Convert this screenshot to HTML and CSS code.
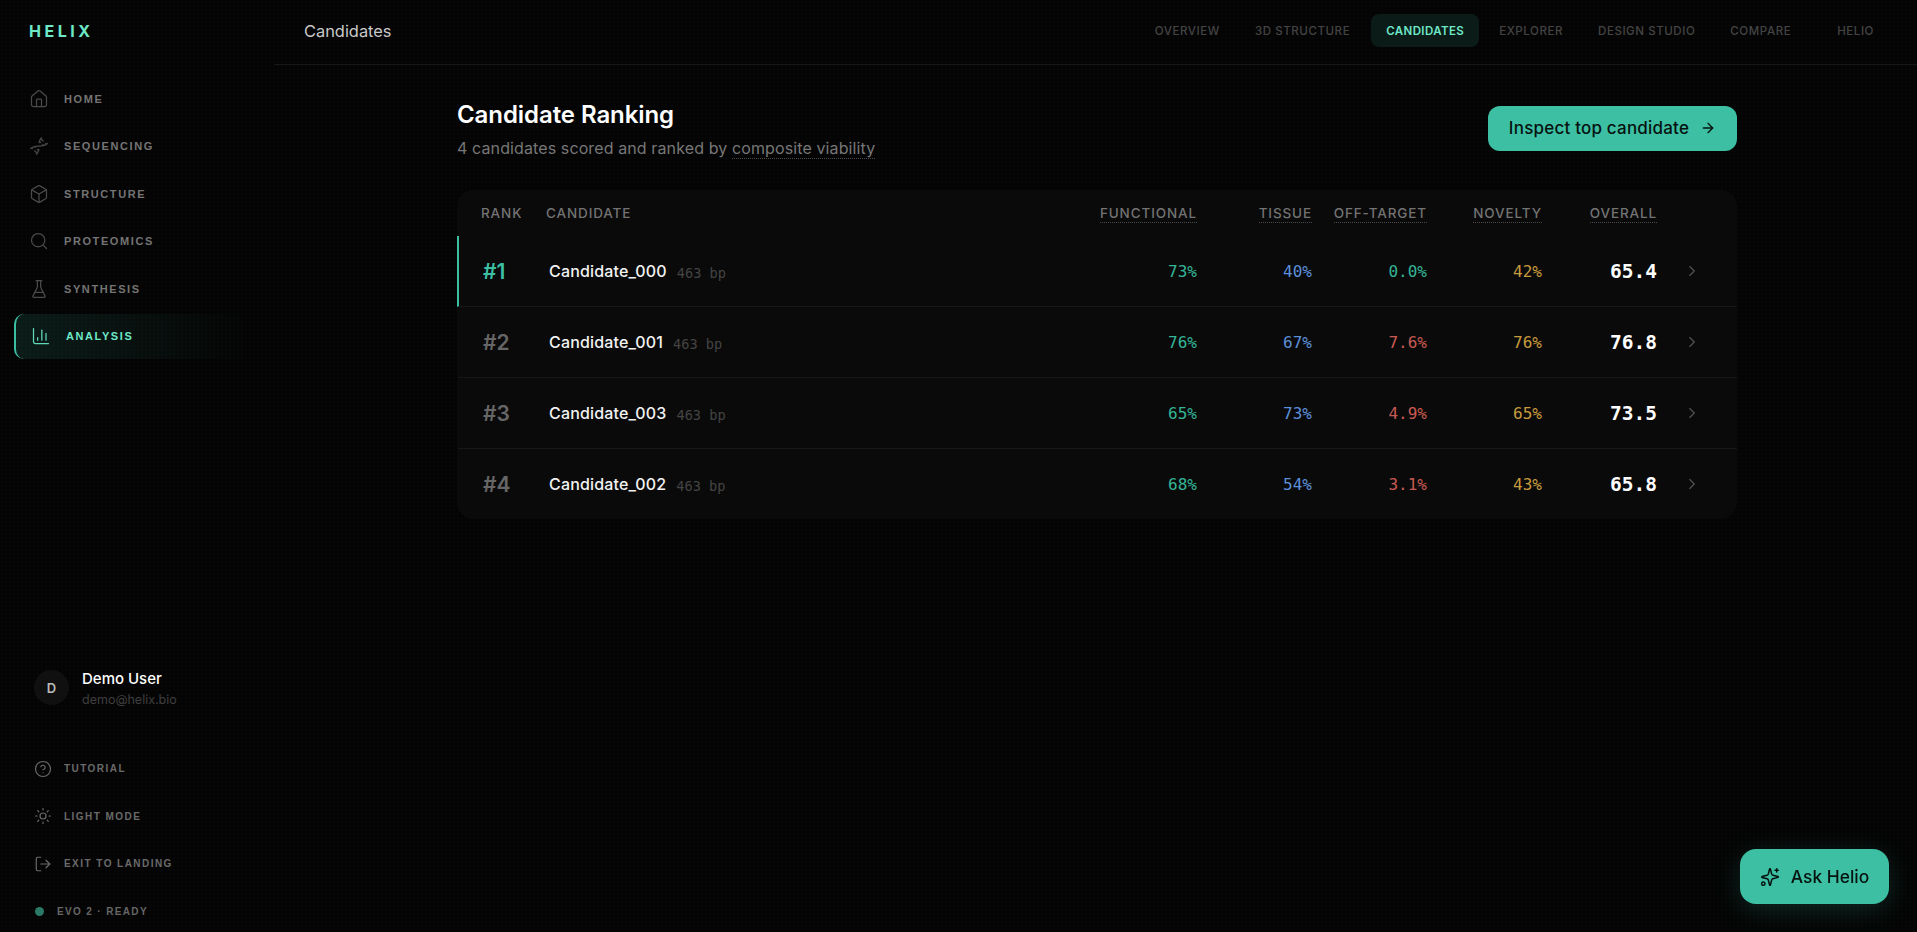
FILE: index.html
```html
<!DOCTYPE html>
<html lang="en">
<head>
<meta charset="utf-8">
<title>Helix - Candidates</title>
<link rel="stylesheet" href="styles.css">
</head>
<body>
<div class="app">
  <aside class="sidebar">
    <div class="logo">HELIX</div>
    <nav class="side-nav">
      <a class="side-item"><svg class="icon" viewBox="0 0 24 24"><path d="M15 21v-8a1 1 0 0 0-1-1h-4a1 1 0 0 0-1 1v8"/><path d="M3 10a2 2 0 0 1 .709-1.528l7-6a2 2 0 0 1 2.582 0l7 6A2 2 0 0 1 21 10v9a2 2 0 0 1-2 2H5a2 2 0 0 1-2-2z"/></svg><span>HOME</span></a>
      <a class="side-item"><svg class="icon" viewBox="0 0 24 24"><path d="M2 15c6.667-6 13.333 0 20-6"/><path d="M9 22c1.798-1.998 2.518-3.995 2.807-5.993"/><path d="M15 2c-1.798 1.998-2.518 3.995-2.807 5.993"/><path d="m17 6-2.5-2.5"/><path d="m14 8-1-1"/><path d="m7 18 2.5 2.5"/><path d="m3.5 14.5.5.5"/><path d="m20 9 .5.5"/><path d="m6.5 12.5 1 1"/><path d="m16.5 10.5 1 1"/><path d="m10 16 1.5 1.5"/></svg><span>SEQUENCING</span></a>
      <a class="side-item"><svg class="icon" viewBox="0 0 24 24"><path d="M21 8a2 2 0 0 0-1-1.73l-7-4a2 2 0 0 0-2 0l-7 4A2 2 0 0 0 3 8v8a2 2 0 0 0 1 1.73l7 4a2 2 0 0 0 2 0l7-4A2 2 0 0 0 21 16Z"/><path d="m3.3 7 8.7 5 8.7-5"/><path d="M12 22V12"/></svg><span>STRUCTURE</span></a>
      <a class="side-item"><svg class="icon" viewBox="0 0 24 24"><circle cx="11" cy="11" r="8"/><path d="m21 21-4.3-4.3"/></svg><span>PROTEOMICS</span></a>
      <a class="side-item"><svg class="icon" viewBox="0 0 24 24"><path d="M10 2v7.527a2 2 0 0 1-.211.896L4.72 20.55a1 1 0 0 0 .9 1.45h12.76a1 1 0 0 0 .9-1.45l-5.069-10.127A2 2 0 0 1 14 9.527V2"/><path d="M8.5 2h7"/><path d="M7 16h10"/></svg><span>SYNTHESIS</span></a>
      <a class="side-item active"><svg class="icon" viewBox="0 0 24 24"><path d="M3 3v16a2 2 0 0 0 2 2h16"/><path d="M18 17V9"/><path d="M13 17V5"/><path d="M8 17v-3"/></svg><span>ANALYSIS</span></a>
    </nav>
    <div class="user">
      <div class="avatar">D</div>
      <div class="user-text">
        <div class="user-name">Demo User</div>
        <div class="user-mail">demo@helix.bio</div>
      </div>
    </div>
    <div class="side-links">
      <a class="side-link"><svg class="icon small" viewBox="0 0 24 24"><circle cx="12" cy="12" r="10"/><path d="M9.09 9a3 3 0 0 1 5.83 1c0 2-3 3-3 3"/><path d="M12 17h.01"/></svg><span>TUTORIAL</span></a>
      <a class="side-link"><svg class="icon small" viewBox="0 0 24 24"><circle cx="12" cy="12" r="4"/><path d="M12 2v2"/><path d="M12 20v2"/><path d="m4.93 4.93 1.41 1.41"/><path d="m17.66 17.66 1.41 1.41"/><path d="M2 12h2"/><path d="M20 12h2"/><path d="m6.34 17.66-1.41 1.41"/><path d="m19.07 4.93-1.41 1.41"/></svg><span>LIGHT MODE</span></a>
      <a class="side-link"><svg class="icon small" viewBox="0 0 24 24"><path d="M9 21H5a2 2 0 0 1-2-2V5a2 2 0 0 1 2-2h4"/><path d="m16 17 5-5-5-5"/><path d="M21 12H9"/></svg><span>EXIT TO LANDING</span></a>
    </div>
    <div class="status"><i class="dot"></i><span>EVO 2 · READY</span></div>
  </aside>

  <div class="main">
    <header class="topbar">
      <div class="page-title">Candidates</div>
      <nav class="tabs">
        <a class="tab">OVERVIEW</a>
        <a class="tab">3D STRUCTURE</a>
        <a class="tab current">CANDIDATES</a>
        <a class="tab">EXPLORER</a>
        <a class="tab">DESIGN STUDIO</a>
        <a class="tab">COMPARE</a>
        <a class="tab last">HELIO</a>
      </nav>
    </header>

    <main class="content">
      <div class="head">
        <div>
          <h1>Candidate Ranking</h1>
          <p class="sub">4 candidates scored and ranked by <span class="dotted">composite viability</span></p>
        </div>
        <button class="cta">Inspect top candidate<svg class="icon arrow" viewBox="0 0 24 24"><path d="M5 12h14"/><path d="m12 5 7 7-7 7"/></svg></button>
      </div>

      <section class="table">
        <div class="thead">
          <span>RANK</span>
          <span>CANDIDATE</span>
          <span class="r"><b>FUNCTIONAL</b></span>
          <span class="r"><b>TISSUE</b></span>
          <span class="r"><b>OFF-TARGET</b></span>
          <span class="r"><b>NOVELTY</b></span>
          <span class="r"><b>OVERALL</b></span>
          <span></span>
        </div>

        <div class="row first">
          <span class="rank">#1</span>
          <span class="cand"><span class="name">Candidate_000</span><span class="bp">463 bp</span></span>
          <span class="val teal">73%</span><span class="val blue">40%</span><span class="val teal">0.0%</span><span class="val amber">42%</span>
          <span class="score">65.4</span>
          <svg class="icon chev" viewBox="0 0 24 24"><path d="m9 18 6-6-6-6"/></svg>
        </div>
        <div class="row">
          <span class="rank">#2</span>
          <span class="cand"><span class="name">Candidate_001</span><span class="bp">463 bp</span></span>
          <span class="val teal">76%</span><span class="val blue">67%</span><span class="val red">7.6%</span><span class="val amber">76%</span>
          <span class="score">76.8</span>
          <svg class="icon chev" viewBox="0 0 24 24"><path d="m9 18 6-6-6-6"/></svg>
        </div>
        <div class="row">
          <span class="rank">#3</span>
          <span class="cand"><span class="name">Candidate_003</span><span class="bp">463 bp</span></span>
          <span class="val teal">65%</span><span class="val blue">73%</span><span class="val red">4.9%</span><span class="val amber">65%</span>
          <span class="score">73.5</span>
          <svg class="icon chev" viewBox="0 0 24 24"><path d="m9 18 6-6-6-6"/></svg>
        </div>
        <div class="row">
          <span class="rank">#4</span>
          <span class="cand"><span class="name">Candidate_002</span><span class="bp">463 bp</span></span>
          <span class="val teal">68%</span><span class="val blue">54%</span><span class="val red">3.1%</span><span class="val amber">43%</span>
          <span class="score">65.8</span>
          <svg class="icon chev" viewBox="0 0 24 24"><path d="m9 18 6-6-6-6"/></svg>
        </div>
      </section>
    </main>
  </div>
</div>

<button class="ask"><svg class="icon spark" viewBox="0 0 24 24"><path d="M9.937 15.5A2 2 0 0 0 8.5 14.063l-6.135-1.582a.5.5 0 0 1 0-.962L8.5 9.936A2 2 0 0 0 9.937 8.5l1.582-6.135a.5.5 0 0 1 .963 0L14.063 8.5A2 2 0 0 0 15.5 9.937l6.135 1.581a.5.5 0 0 1 0 .964L15.5 14.063a2 2 0 0 0-1.437 1.437l-1.582 6.135a.5.5 0 0 1-.963 0z"/><path d="M20 2v4"/><path d="M22 4h-4"/><circle cx="4" cy="20" r="2"/></svg>Ask Helio</button>
</body>
</html>
```

FILE: styles.css
```css
* { box-sizing: border-box; }
html, body { height: 100%; }
body {
  margin: 0;
  overflow: hidden;
  background-color: #040404;
  background-image: radial-gradient(rgba(255, 255, 255, 0.01) 1px, transparent 1px);
  background-size: 4px 4px;
  color: #fff;
  font-family: Inter, "Liberation Sans", sans-serif;
}
.app { display: flex; height: 932px; }
.icon {
  width: 20px;
  height: 20px;
  flex: none;
  fill: none;
  stroke: currentColor;
  stroke-width: 1.5;
  stroke-linecap: round;
  stroke-linejoin: round;
}
.icon.small { width: 18px; height: 18px; }

/* Sidebar */
.sidebar {
  width: 274px;
  flex: none;
  display: flex;
  flex-direction: column;
  padding: 0 24px 9px 14px;
}
.logo {
  height: 62px;
  padding-left: 15px;
  display: flex;
  align-items: center;
  font-size: 16px;
  font-weight: 700;
  letter-spacing: 0.22em;
  color: #6ee7c7;
}
.side-nav { display: flex; flex-direction: column; gap: 2.5px; margin-top: 14px; }
.side-item {
  height: 45px;
  display: flex;
  align-items: center;
  gap: 15px;
  padding-left: 15px;
  font-family: "Liberation Sans", sans-serif;
  font-size: 11px;
  font-weight: 700;
  letter-spacing: 0.145em;
  color: #747474;
  border-radius: 10px;
}
.side-item .icon { color: #4a4a4a; }
.side-item.active {
  border-left: 2px solid #3bbfa3;
  background: linear-gradient(90deg, rgba(60, 190, 160, 0.13), rgba(60, 190, 160, 0) 100%);
  color: #6ee7c7;
}
.side-item.active .icon { color: #5fd9ba; }

.user {
  margin-top: auto;
  display: flex;
  align-items: center;
  gap: 13px;
  padding-left: 20px;
}
.avatar {
  width: 35px;
  height: 35px;
  border-radius: 50%;
  background: #101010;
  color: #bbb;
  display: flex;
  align-items: center;
  justify-content: center;
  font-size: 13px;
  font-weight: 600;
}
.user-text { margin-top: 4px; }
.user-name { font-size: 15px; font-weight: 500; line-height: 20px; color: #fff; }
.user-mail { font-size: 12.5px; line-height: 20px; margin-top: 1px; color: #3f3f3f; }

.side-links { display: flex; flex-direction: column; gap: 2.5px; margin-top: 36px; }
.side-link {
  height: 45px;
  display: flex;
  align-items: center;
  gap: 12px;
  padding-left: 20px;
  font-family: "Liberation Sans", sans-serif;
  font-size: 10px;
  font-weight: 700;
  letter-spacing: 0.145em;
  color: #6a6a6a;
}
.side-link .icon { color: #6a6a6a; stroke-width: 1.6; }
.status {
  display: flex;
  align-items: center;
  gap: 13px;
  height: 24px;
  margin-top: 13px;
  padding-left: 21px;
  font-family: "Liberation Sans", sans-serif;
  font-size: 10px;
  font-weight: 700;
  letter-spacing: 0.135em;
  color: #666;
}
.dot { width: 9px; height: 9px; border-radius: 50%; background: #2b7a65; }

/* Top bar */
.main { flex: 1; min-width: 0; display: flex; flex-direction: column; }
.topbar {
  height: 65px;
  flex: none;
  display: flex;
  align-items: center;
  justify-content: space-between;
  padding: 0 28px 3px 30px;
  border-bottom: 1px solid #171717;
}
.page-title { font-size: 16.4px; color: #c9c9c9; }
.tabs { display: flex; align-items: center; gap: 5px; }
.tab {
  height: 33px;
  display: flex;
  align-items: center;
  padding: 0 15px;
  border-radius: 8px;
  font-size: 11.5px;
  font-weight: 500;
  letter-spacing: 0.05em;
  color: #444;
}
.tab.last { padding-left: 26px; }
.tab.current { margin-left: 1px; background: #0b1c18; color: #6ee7c7; font-weight: 600; letter-spacing: 0.035em; }

/* Content */
.content { padding: 32px 180px 0 183px; }
.head { display: flex; justify-content: space-between; align-items: center; }
h1 { margin: 0; font-size: 24px; font-weight: 600; line-height: 35px; letter-spacing: -0.003em; color: #fff; }
.sub { margin: 5px 0 0; font-size: 16px; line-height: 22px; letter-spacing: 0.007em; color: #777; }
.dotted { border-bottom: 1px dotted #4a4a4a; }
.cta {
  width: 249px;
  height: 45px;
  border: 0;
  border-radius: 12px;
  background: #3cbfa3;
  color: #07120f;
  display: flex;
  align-items: center;
  justify-content: center;
  gap: 11px;
  padding-top: 1px;
  font-family: Inter, sans-serif;
  font-size: 17px;
  font-weight: 500;
  letter-spacing: 0.012em;
}
.icon.arrow { width: 16px; height: 16px; stroke-width: 2; }

.table {
  margin-top: 31px;
  border-radius: 16px;
  background: #0a0a0a;
  overflow: hidden;
}
.thead, .row {
  display: grid;
  grid-template-columns: 41px 1fr 91px 91px 91px 91px 91px 32px;
  column-gap: 24px;
  align-items: center;
}
.thead {
  height: 46px;
  padding: 0 24px;
  font-size: 13.5px;
  font-weight: 500;
  letter-spacing: 0.065em;
  color: #737373;
}
.thead .r { text-align: right; white-space: nowrap; direction: rtl; }
.thead b { font-weight: 500; border-bottom: 1px dotted #4a4a4a; padding-bottom: 1px; direction: ltr; unicode-bidi: isolate; }
.row {
  height: 71px;
  padding: 0 24px;
  border-left: 2px solid transparent;
  border-bottom: 1px solid #171717;
}
.row:last-child { border-bottom: 0; height: 70px; }
.row.first { border-left-color: #3bbfa3; }
.rank { font-size: 21px; font-weight: 600; color: #666; }
.first .rank { color: #3cbfa3; }
.cand { display: flex; align-items: baseline; gap: 10px; padding-left: 1px; }
.name { font-size: 16px; font-weight: 500; letter-spacing: 0.01em; color: #f2f2f2; }
.bp { font-family: "DejaVu Sans Mono", monospace; font-size: 13.6px; color: #444; position: relative; top: 1px; }
.val, .score { text-align: right; font-family: "DejaVu Sans Mono", monospace; }
.val { font-size: 16px; }
.teal { color: #34b597; }
.blue { color: #5b8fd8; }
.red { color: #c95a52; }
.amber { color: #c79a3e; }
.score { font-size: 19.5px; font-weight: 700; color: #fff; }
.icon.chev { width: 18px; height: 18px; color: #555; margin-left: 2px; }

.ask {
  position: fixed;
  left: 1740px;
  top: 849px;
  width: 149px;
  height: 55px;
  border: 0;
  border-radius: 16px;
  background: #3cbfa3;
  color: #07120f;
  display: flex;
  align-items: center;
  justify-content: center;
  gap: 11px;
  font-family: Inter, sans-serif;
  font-size: 17.4px;
  font-weight: 500;
  box-shadow: 0 6px 28px rgba(60, 191, 163, 0.2);
}
.icon.spark { width: 20px; height: 20px; stroke-width: 1.8; }
```
